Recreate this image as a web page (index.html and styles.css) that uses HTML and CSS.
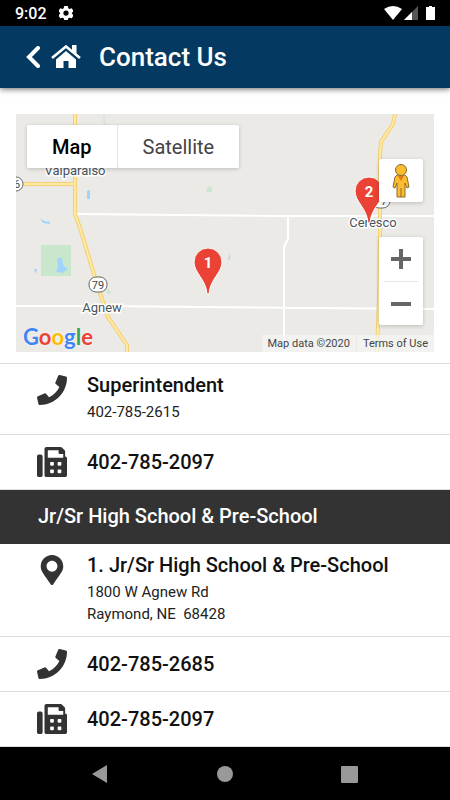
FILE: index.html
```
<!DOCTYPE html>
<html lang="en">
<head>
    <meta charset="UTF-8">
    <meta name="viewport" content="width=device-width, initial-scale=1.0">
    <title>Contact Us</title>
    <link rel="stylesheet" href="styles.css">
</head>
<body>
    <!-- Icons used more than once -->
    <svg class="icon-defs" width="0" height="0" aria-hidden="true">
        <symbol id="icon-phone" viewBox="0 0 512 512">
            <path d="M493.400 24.600l-104-24c-11.300-2.600-22.900 3.300-27.500 13.900l-48 112c-4.200 9.800-1.400 21.300 6.900 28l60.600 49.600c-36 76.700-98.900 140.500-177.200 177.200l-49.600-60.600c-6.800-8.300-18.200-11.100-28-6.900l-112 48C3.900 366.500-2 378.100.6 389.400l24 104C27.100 504.200 36.700 512 48 512c256.100 0 464-207.500 464-464 0-11.200-7.700-20.900-18.600-23.400z"/>
        </symbol>
        <symbol id="icon-fax" viewBox="0 0 512 512">
            <path fill-rule="evenodd" d="M64 128H32c-18 0-32 14-32 32v320c0 18 14 32 32 32h32c18 0 32-14 32-32V160c0-18-14-32-32-32zM480 160V77c0-8-3-16-9-22L425 9c-6-6-14-9-22-9H160c-18 0-32 14-32 32v448c0 18 14 32 32 32h320c18 0 32-14 32-32V192c0-18-14-32-32-32zM288 432c0 9-7 16-16 16h-32c-9 0-16-7-16-16v-32c0-9 7-16 16-16h32c9 0 16 7 16 16zM288 304c0 9-7 16-16 16h-32c-9 0-16-7-16-16v-32c0-9 7-16 16-16h32c9 0 16 7 16 16zM416 432c0 9-7 16-16 16h-32c-9 0-16-7-16-16v-32c0-9 7-16 16-16h32c9 0 16 7 16 16zM416 304c0 9-7 16-16 16h-32c-9 0-16-7-16-16v-32c0-9 7-16 16-16h32c9 0 16 7 16 16zM448 184H184V56h184v48c0 9 7 16 16 16h64z"/>
        </symbol>
        <symbol id="icon-pin" viewBox="0 0 384 512">
            <path d="M172.268 501.670C26.970 291.031 0 269.413 0 192 0 85.961 85.961 0 192 0s192 85.961 192 192c0 77.413-26.970 99.031-172.268 309.670-9.535 13.774-29.930 13.773-39.464 0zM192 285c51 0 93-42 93-93s-42-93-93-93-93 42-93 93 42 93 93 93z"/>
        </symbol>
        <symbol id="map-marker" viewBox="-15 -15 30 48">
            <path d="M-1 32C-2 17-14 11-14 0A14 14 0 0 1 14 0C14 11 2 17 1 32z" fill="#ea4335" stroke="#fff"/>
        </symbol>
    </svg>

    <div class="status-bar">
        <span class="time">9:02</span>
        <svg width="14" height="14" viewBox="0 0 24 24" fill="#fff">
            <path fill-rule="evenodd" d="M9 0h6l1 4 2 1 4-1 3 5-3 3v1l3 3-3 5-4-1-2 1-1 3H9l-1-3-2-1-4 1-3-5 3-3v-1L-1 9l3-5 4 1 2-1zM12 7.500a4.500 4.500 0 1 0 0 9 4.500 4.500 0 0 0 0-9z"/>
        </svg>
        <div class="status-icons">
            <svg width="18" height="14" viewBox="0 0 18 14"><path d="M0 3Q9-3 18 3L9 14z" fill="#fff"/></svg>
            <svg width="14" height="14" viewBox="0 0 14 14"><path d="M14 0v14H0z" fill="#555"/><path d="M8 6v8H0z" fill="#fff"/></svg>
            <svg class="battery" width="9" height="14" viewBox="0 0 9 14"><path d="M3 0h3v1h3v13H0V1h3z" fill="#fff"/></svg>
        </div>
    </div>

    <header class="header">
        <a href="#" aria-label="Back">
            <svg width="14" height="22" viewBox="0 0 14 22" fill="none" stroke="#fff" stroke-width="4"><path d="M12 2L3 11l9 9" stroke-linecap="round"/></svg>
        </a>
        <a href="#" class="home" aria-label="Home">
            <svg width="30" height="24" viewBox="0 0 30 24" fill="#fff">
                <path d="M15 6l10 8.500V23h-7.500v-7h-5v7H5v-8.500z"/>
                <path d="M1 13L15 1.500 29 13" fill="none" stroke="#fff" stroke-width="2.600"/>
                <path d="M21 0h4.500v10L21 6.500z"/>
            </svg>
        </a>
        <h1>Contact Us</h1>
    </header>

    <main>
        <div class="map">
            <svg class="map-canvas" width="418" height="238" viewBox="0 0 418 238">
                <!-- parks and water -->
                <path d="M25 131h30v31H25zM190 78l2-5 2-1 2 2v4zM90 176l2-1 3 4-3 1z" fill="#c9e7cc"/>
                <path d="M41 145l5-2 1 8 5 4-6 4-7-2 3-2zM18 155h3l-1 5zM24 104l4 3 6 1v2l-7-1zM71 77l3-1v9h-3zM212 146l2-7v6l-2 1z" fill="#9fd4fb"/>
                <path d="M88 0v8l3 5" fill="none" stroke="#d8d8d5"/>

                <!-- minor roads -->
                <g fill="none" stroke="#fff" stroke-width="2">
                    <path d="M60 100l211 2h147M0 192h84l334 3M272 102v23l-4 8v105"/>
                </g>

                <!-- highways -->
                <g fill="none" stroke="#f4cf73" stroke-width="4">
                    <path d="M59 0v100l5 14 17 56 11 33 19 28v7M0 70h59M379 0l-2 10-12 18-1 13v85l-1 60-2 52"/>
                </g>
                <g fill="none" stroke="#feeaa3" stroke-width="2">
                    <path d="M59 0v100l5 14 17 56 11 33 19 28v7M0 70h59M379 0l-2 10-12 18-1 13v85l-1 60-2 52"/>
                </g>

                <!-- route shields -->
                <g class="shield">
                    <rect x="-11" y="63" width="18" height="14" rx="7"/>
                    <text x="1" y="74">6</text>
                    <rect x="73" y="163" width="18" height="15" rx="7"/>
                    <text x="82" y="175">79</text>
                    <rect x="356" y="79" width="18" height="15" rx="7"/>
                    <text x="365" y="91">77</text>
                </g>

                <g class="place">
                    <text x="59" y="61">Valparaiso</text>
                    <text x="86" y="198">Agnew</text>
                    <text x="357" y="113">Ceresco</text>
                </g>

                <use href="#map-marker" x="177" y="133" width="30" height="48"/>
                <use href="#map-marker" x="338" y="62" width="30" height="48"/>
                <g class="marker-number">
                    <text x="192" y="154">1</text>
                    <text x="353" y="83">2</text>
                </g>
            </svg>

            <div class="map-type">
                <button type="button" class="active">Map</button>
                <button type="button">Satellite</button>
            </div>

            <div class="map-controls">
                <button type="button" class="pegman" aria-label="Street View">
                    <svg width="18" height="34" viewBox="0 0 18 34">
                        <path d="M5 11h8l2 2 2 10-2 1-2-5v14H5V19l-2 5-2-1 2-10z" fill="#fbbc2d" stroke="#8b6b35"/>
                        <path d="M6 12h6l-3 5z" fill="#df7a24"/>
                        <path d="M9 24v9" stroke="#8b6b35"/>
                        <circle cx="9" cy="6" r="5.500" fill="#fbbc2d" stroke="#8b6b35"/>
                    </svg>
                </button>
                <div class="zoom">
                    <button type="button" aria-label="Zoom in"><svg width="20" height="20" viewBox="0 0 20 20"><path d="M8 0h4v8h8v4h-8v8H8v-8H0V8h8z" fill="#666"/></svg></button>
                    <button type="button" aria-label="Zoom out"><svg width="20" height="20" viewBox="0 0 20 20"><path d="M0 8h20v4H0z" fill="#666"/></svg></button>
                </div>
            </div>

            <a href="#" class="google"><span class="blue">G</span><span class="red">o</span><span class="yellow">o</span><span class="blue">g</span><span class="green">l</span><span class="red">e</span></a>
            <div class="map-footer">
                <span>Map data ©2020</span>
                <a href="#">Terms of Use</a>
            </div>
        </div>

        <div class="contacts">
            <a href="tel:402-785-2615" class="contact">
                <svg class="icon"><use href="#icon-phone"/></svg>
                <div>
                    <h2>Superintendent</h2>
                    <p>402-785-2615</p>
                </div>
            </a>
            <a href="tel:402-785-2097" class="contact single">
                <svg class="icon"><use href="#icon-fax"/></svg>
                <h2>402-785-2097</h2>
            </a>
            <h2 class="section">Jr/Sr High School &amp; Pre-School</h2>
            <a href="#" class="contact">
                <svg class="icon"><use href="#icon-pin"/></svg>
                <div>
                    <h2>1. Jr/Sr High School &amp; Pre-School</h2>
                    <p>1800 W Agnew Rd<br>Raymond, NE&nbsp; 68428</p>
                </div>
            </a>
            <a href="tel:402-785-2685" class="contact single">
                <svg class="icon"><use href="#icon-phone"/></svg>
                <h2>402-785-2685</h2>
            </a>
            <a href="tel:402-785-2097" class="contact single">
                <svg class="icon"><use href="#icon-fax"/></svg>
                <h2>402-785-2097</h2>
            </a>
        </div>
    </main>

    <nav class="nav-bar">
        <button type="button" aria-label="Back"><svg width="18" height="18" viewBox="0 0 18 18"><path d="M15 0v18L0 9z"/></svg></button>
        <button type="button" aria-label="Home"><svg width="18" height="18" viewBox="0 0 18 18"><circle cx="9" cy="9" r="8"/></svg></button>
        <button type="button" aria-label="Recent apps"><svg width="18" height="18" viewBox="0 0 18 18"><rect x="1" y="1" width="17" height="17" rx="1"/></svg></button>
    </nav>
</body>
</html>
```
FILE: styles.css
```
* {
    box-sizing: border-box;
}

body {
    font-family: Roboto, Arial, sans-serif;
    background-color: #fff;
    color: #111;
    margin: 0;
    min-height: 100vh;
    display: flex;
    flex-direction: column;
}

h1, h2, p {
    margin: 0;
}

a {
    color: inherit;
    text-decoration: none;
}

button {
    font-family: inherit;
    border: none;
    padding: 0;
    cursor: pointer;
}

svg {
    display: block;
}

.icon-defs {
    position: absolute;
}

.status-bar {
    display: flex;
    align-items: center;
    height: 26px;
    padding: 0 15px;
    background-color: #000;
    color: #fff;
}

.time {
    font-size: 16px;
    font-weight: 500;
    line-height: 26px;
    padding-top: 2px;
    margin-right: 12px;
}

.status-icons {
    display: flex;
    gap: 2px;
    margin-left: auto;
}

.battery {
    margin-left: 6px;
}

.header {
    display: flex;
    align-items: center;
    height: 62px;
    padding: 0 26px 1px;
    background-color: #043962;
    color: #fff;
    box-shadow: 0 1px 6px rgba(0, 0, 0, 0.6);
}

.header h1 {
    font-size: 26px;
    font-weight: 500;
}

.home {
    margin: 0 18px 0 11px;
}

main {
    flex: 1;
}

.map {
    position: relative;
    height: 238px;
    margin: 26px 16px 11px;
    background-color: #ebeae6;
    overflow: hidden;
}

.map text {
    text-anchor: middle;
}

.shield {
    font-size: 11px;
}

.shield rect {
    fill: #fff;
    stroke: #666;
}

.shield text {
    fill: #444;
}

.place {
    font-size: 13px;
    fill: #4b535a;
    stroke: #fff;
    stroke-width: 3px;
    paint-order: stroke;
}

.marker-number {
    font-size: 15px;
    font-weight: 700;
    fill: #fff;
}

.map-type {
    position: absolute;
    top: 11px;
    left: 11px;
    display: flex;
    box-shadow: 0 1px 4px rgba(0, 0, 0, 0.2);
    border-radius: 2px;
}

.map-type button {
    height: 43px;
    padding: 0 25px;
    background-color: #fff;
    color: #444;
    font-size: 20px;
    border-radius: 2px;
}

.map-type .active {
    color: #000;
    font-weight: 500;
    border-right: 1px solid #e6e6e6;
}

.map-controls {
    position: absolute;
    top: 45px;
    right: 11px;
    width: 44px;
}

.pegman, .zoom {
    background-color: #fff;
    border-radius: 2px;
    box-shadow: 0 1px 4px rgba(0, 0, 0, 0.2);
}

.pegman {
    display: grid;
    place-items: center;
    width: 44px;
    height: 43px;
    margin-bottom: 35px;
}

.zoom {
    padding: 0 5px;
}

.zoom button {
    display: grid;
    place-items: center;
    width: 100%;
    height: 44px;
    background-color: transparent;
}

.zoom button + button {
    border-top: 1px solid #e6e6e6;
}

.google {
    position: absolute;
    left: 7px;
    bottom: 2px;
    font-family: Lato, sans-serif;
    font-size: 22px;
    font-weight: 700;
    line-height: 26px;
    text-shadow: 0 0 2px #fff;
}

.blue {
    color: #4285f4;
}

.red {
    color: #ea4335;
}

.yellow {
    color: #fbbc05;
}

.green {
    color: #34a853;
}

.map-footer {
    position: absolute;
    right: 0;
    bottom: 0;
    display: flex;
    gap: 1px;
    color: #444;
    font-size: 11px;
    line-height: 17px;
}

.map-footer span, .map-footer a {
    padding: 0 6px;
    background-color: rgba(245, 245, 245, 0.7);
}

.contacts {
    border-top: 1px solid #dcdcdc;
}

.contact {
    display: flex;
    align-items: flex-start;
    gap: 20px;
    padding: 9px 37px 11px;
    border-bottom: 1px solid #dcdcdc;
}

.contact.single {
    align-items: center;
    padding: 12px 37px;
}

.contact h2, .section {
    font-size: 20px;
    font-weight: 500;
    line-height: 24px;
}

.contact p {
    margin-top: 4px;
    font-size: 15px;
    line-height: 22px;
    color: #222;
}

.icon {
    flex: none;
    width: 30px;
    height: 30px;
    fill: #333;
}

.contact:not(.single) .icon {
    margin-top: 2px;
}

.section {
    padding: 14px 38px 16px;
    background-color: #333;
    color: #fff;
}

.nav-bar {
    display: flex;
    justify-content: center;
    align-items: center;
    gap: 106px;
    height: 53px;
    background-color: #000;
}

.nav-bar button {
    background-color: transparent;
    fill: #999;
}
```
